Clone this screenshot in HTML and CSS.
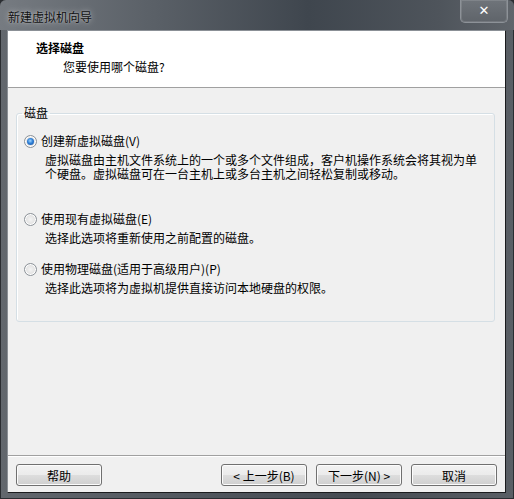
FILE: index.html
```html
<!DOCTYPE html>
<html lang="zh-CN">
<head>
    <meta charset="UTF-8">
    <title>新建虚拟机向导</title>
    <link rel="stylesheet" href="styles.css">
</head>
<body>

<div class="window">
    <div class="titlebar">
        <span class="title">新建虚拟机向导</span>
        <button class="close">✕</button>
    </div>

    <div class="client">
        <!-- Wizard page header -->
        <div class="header">
            <h1>选择磁盘</h1>
            <p>您要使用哪个磁盘?</p>
        </div>

        <div class="body">
            <fieldset class="group">
                <legend>磁盘</legend>

                <div class="option">
                    <label class="choice"><span class="radio checked"></span>创建新虚拟磁盘(V)</label>
                    <p class="desc">虚拟磁盘由主机文件系统上的一个或多个文件组成，客户机操作系统会将其视为单个硬盘。虚拟磁盘可在一台主机上或多台主机之间轻松复制或移动。</p>
                </div>

                <div class="option">
                    <label class="choice"><span class="radio"></span>使用现有虚拟磁盘(E)</label>
                    <p class="desc">选择此选项将重新使用之前配置的磁盘。</p>
                </div>

                <div class="option">
                    <label class="choice"><span class="radio"></span>使用物理磁盘(适用于高级用户)(P)</label>
                    <p class="desc">选择此选项将为虚拟机提供直接访问本地硬盘的权限。</p>
                </div>
            </fieldset>
        </div>

        <div class="footer">
            <button class="button">帮助</button>
            <span class="spacer"></span>
            <button class="button">&lt; 上一步(B)</button>
            <button class="button">下一步(N) &gt;</button>
            <button class="button">取消</button>
        </div>
    </div>
</div>

</body>
</html>
```

FILE: styles.css
```css
/* General Styles */
body {
    margin: 0;
    padding: 0;
    background-color: #2b2e32;
    font-family: "Noto Sans CJK SC", "Liberation Sans", sans-serif;
    font-size: 12px;
    color: #000;
}

.window {
    width: 514px;
    height: 499px;
    box-sizing: border-box;
    padding: 0 8px 6px 7px;
    display: flex;
    flex-direction: column;
    border-radius: 6px 6px 0 0;
    background: linear-gradient(to right, #62676d 0%, #50565d 40%, #454b52 70%, #5a5f65 100%);
    box-shadow: inset 0 0 0 1px #2a2d31;
}

/* Title bar */
.titlebar {
    height: 30px;
    display: flex;
    align-items: flex-start;
    justify-content: space-between;
    background: linear-gradient(to right, #767b81 0%, #5a6067 30%, #3f464e 60%, #4e545b 85%, #60656b 100%);
    margin: 0 -8px 0 -7px;
    padding: 0 7px 0 8px;
    border-radius: 6px 6px 0 0;
}

.title {
    margin-top: 9px;
    line-height: 16px;
    color: #111;
    text-shadow: 0 0 6px rgba(255, 255, 255, 0.55), 0 0 2px rgba(255, 255, 255, 0.4);
}

.close {
    width: 48px;
    height: 23px;
    margin-right: -1px;
    padding: 0;
    border: 1px solid #8d9298;
    border-top: none;
    border-radius: 0 0 5px 5px;
    background: linear-gradient(to bottom, #6f747a, #5f646a);
    box-shadow: inset 0 0 0 1px rgba(255, 255, 255, 0.12);
    color: #fff;
    font-family: "DejaVu Sans", sans-serif;
    font-size: 13px;
    font-weight: bold;
    line-height: 20px;
}

/* Client area */
.client {
    flex: 1;
    display: flex;
    flex-direction: column;
    background-color: #f0f0f0;
    border: 1px solid;
    border-color: #8b9096 #1b1c1e #1b1c1e #8b9096;
}

.header {
    height: 57px;
    box-sizing: border-box;
    background-color: #ffffff;
    border-bottom: 1px solid #a0a0a0;
    padding: 9px 0 0 28px;
}

.header h1 {
    margin: 0;
    font-size: 12px;
    line-height: 16px;
    font-weight: bold;
}

.header p {
    margin: 3px 0 0 27px;
    line-height: 16px;
}

.body {
    flex: 1;
    padding: 17px 10px 0 8px;
}

.group {
    margin: 0;
    padding: 12px 0 26px 7px;
    border: 1px solid #d5dfe5;
    border-radius: 3px;
    box-shadow: inset 1px 1px 0 #ffffff;
}

.group legend {
    margin-left: -2px;
    padding: 0 2px;
    line-height: 16px;
}

.option + .option {
    margin-top: 30px;
}

.option + .option + .option {
    margin-top: 16px;
}

.choice {
    display: flex;
    align-items: center;
    height: 16px;
    line-height: 16px;
}

.radio {
    width: 11px;
    height: 11px;
    margin-right: 4px;
    border: 1px solid #8c9298;
    border-radius: 50%;
    background: radial-gradient(circle at 50% 50%, #f4f4f4 0%, #e2e2e2 60%, #cfcfcf 100%);
    box-shadow: inset 0 0 0 1px #ffffff;
    position: relative;
}

.radio.checked::after {
    content: "";
    position: absolute;
    left: 2px;
    top: 2px;
    width: 7px;
    height: 7px;
    border-radius: 50%;
    background: radial-gradient(circle at 45% 40%, #9fd6ff 0%, #2f7fd6 45%, #1b4f9a 100%);
}

.desc {
    margin: 4px 0 0 21px;
    max-width: 434px;
    line-height: 14px;
}

/* Footer buttons */
.footer {
    display: flex;
    gap: 9px;
    padding: 8px 8px 6px 8px;
    border-top: 1px solid #a0a0a0;
    box-shadow: inset 0 1px 0 #ffffff;
}

.spacer {
    flex: 1;
}

.button {
    width: 86px;
    height: 22px;
    padding: 0;
    font-family: inherit;
    font-size: 12px;
    color: #000;
    border: 1px solid #707070;
    border-radius: 3px;
    background: linear-gradient(to bottom, #f2f2f2 0%, #ebebeb 50%, #dddddd 51%, #cfcfcf 100%);
    box-shadow: inset 0 0 0 1px #fcfcfc;
}
```
